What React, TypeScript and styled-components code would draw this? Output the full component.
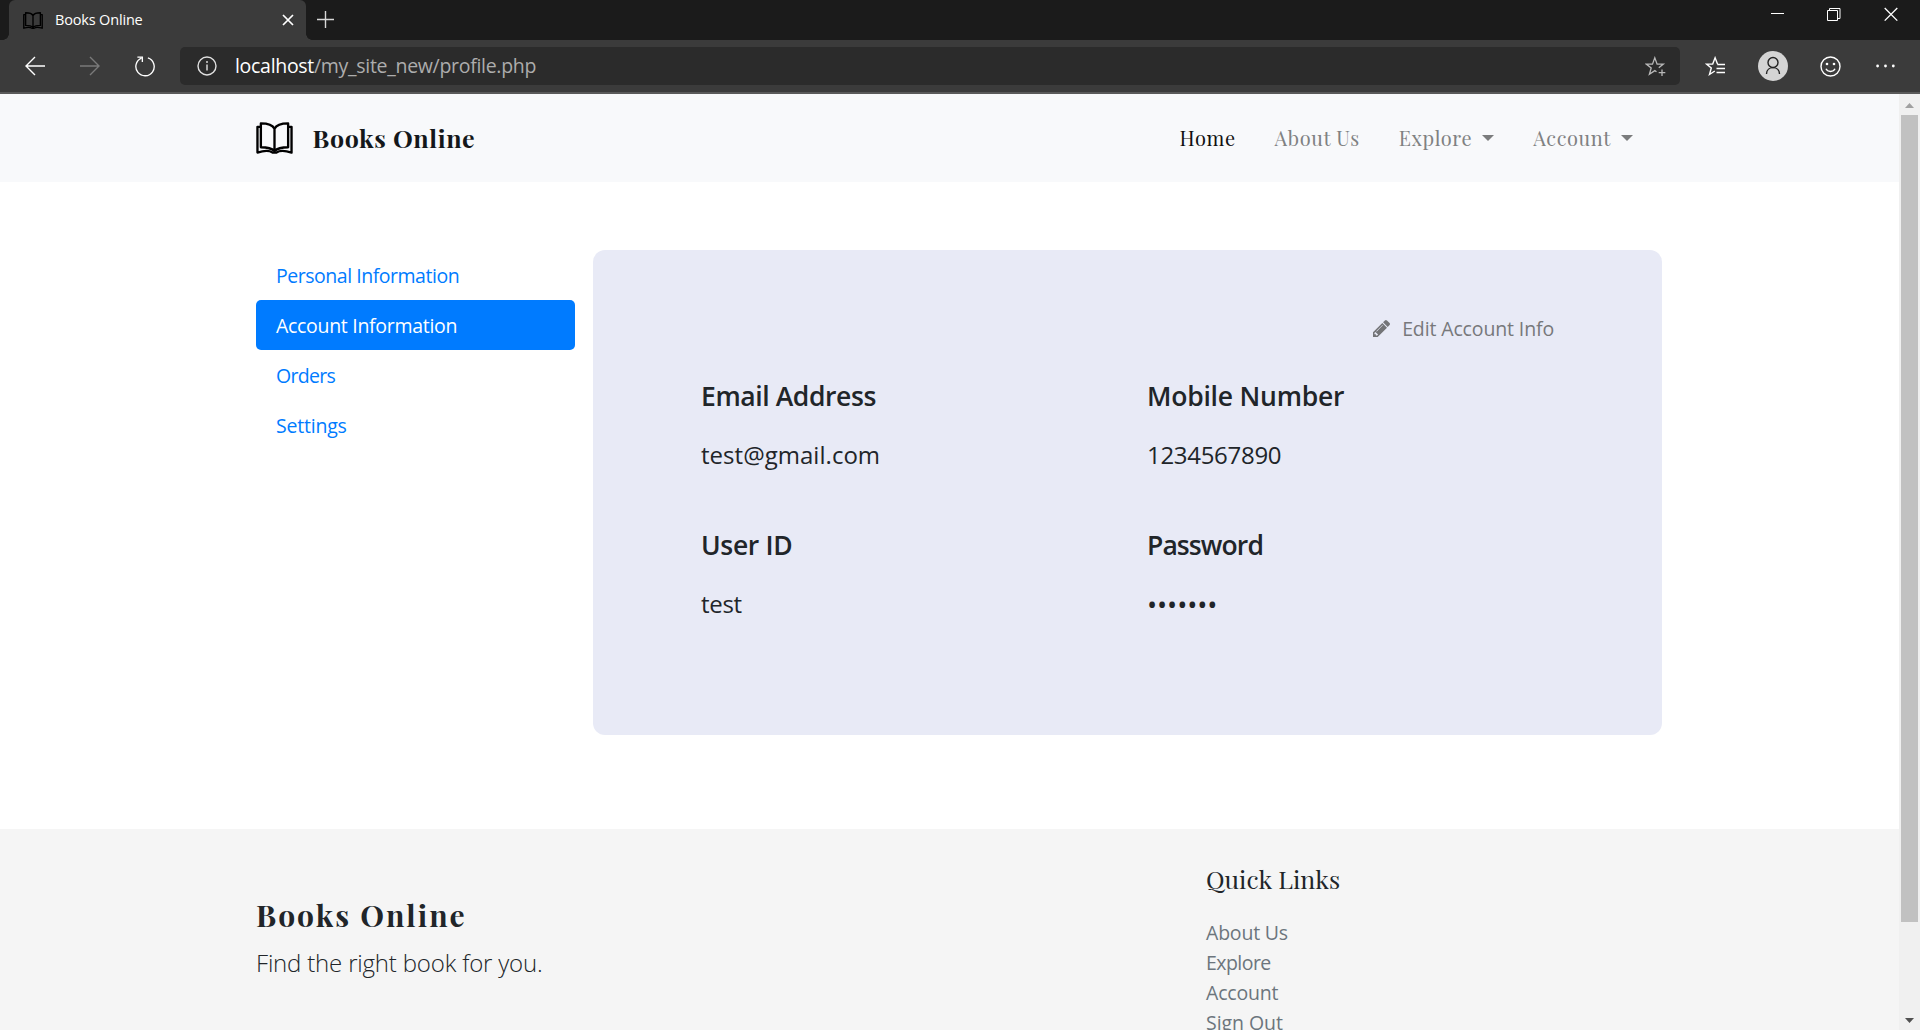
import React from "react";
import styled, { createGlobalStyle, css } from "styled-components";

const sans = `"Open Sans", "Noto Sans", sans-serif`;
const serif = `"Playfair Display", "Liberation Serif", serif`;

const Global = createGlobalStyle`
  * { box-sizing: border-box; }
  html, body { margin: 0; height: 100%; overflow: hidden; }
  body { font-family: ${sans}; color: #212529; background: #fff; }
  a { text-decoration: none; color: inherit; }
  h2, h3, h4, p { margin: 0; padding: 0; font-weight: inherit; }
  svg { display: block; flex: none; }
`;

const Window = styled.div`
  width: 1920px;
  height: 1030px;
  display: flex;
  flex-direction: column;
  overflow: hidden;
`;

/* ---- browser chrome ---- */
const TitleBar = styled.div`
  flex: none;
  height: 40px;
  background: #1b1b1b;
  display: flex;
  padding-left: 9px;
`;
const Tab = styled.div`
  position: relative;
  width: 297px;
  height: 40px;
  background: #3b3b3b;
  border-radius: 6px 6px 0 0;
  display: flex;
  align-items: center;
  padding: 0 12px 0 14px;
  color: #fff;

  /* flared feet where the tab meets the toolbar */
  &::before,
  &::after {
    content: "";
    position: absolute;
    bottom: 0;
    width: 6px;
    height: 6px;
  }
  &::before {
    left: -6px;
    background: radial-gradient(circle at 0 0, transparent 5.5px, #3b3b3b 6px);
  }
  &::after {
    right: -6px;
    background: radial-gradient(circle at 100% 0, transparent 5.5px, #3b3b3b 6px);
  }
`;
const TabTitle = styled.span`
  flex: 1;
  margin-left: 12px;
  font-size: 14.5px;
  letter-spacing: -0.17px;
  line-height: 20px;
`;
const NewTab = styled.div`
  padding: 11px 0 0 11px;
`;
const WindowControls = styled.div`
  margin-left: auto;
  display: flex;
  gap: 43px;
  padding: 7px 22px 0 0;
`;
const Toolbar = styled.div`
  flex: none;
  height: 54px;
  background: #3b3b3b;
  border-bottom: 2px solid #5a5a5a;
  display: flex;
  align-items: center;
`;
const NavButtons = styled.div`
  width: 180px;
  display: flex;
  gap: 34px;
  padding-left: 25px;
`;
const AddressBar = styled.div`
  width: 1500px;
  height: 38px;
  border-radius: 5px;
  background: #2b2b2b;
  display: flex;
  align-items: center;
  padding: 0 14px 0 17px;
`;
const Url = styled.span`
  flex: 1;
  margin-left: 18px;
  font-size: 19.5px;
  letter-spacing: -0.3px;
  line-height: 30px;
  color: #adadad;
  b { font-weight: 400; color: #fff; }
`;
const Tools = styled.div`
  flex: 1;
  display: flex;
  align-items: center;
  padding-left: 25px;
`;
const Avatar = styled.div`
  width: 30px;
  height: 30px;
  border-radius: 50%;
  background: #d4d4d4;
  margin: 0 31.5px 0 32px;
`;
const More = styled.div`
  margin-left: 35.5px;
`;

/* ---- page ---- */
const Viewport = styled.div`
  flex: 1;
  min-height: 0;
  display: flex;
`;
const Page = styled.div`
  width: 1899px;
  overflow: hidden;
`;
const Scrollbar = styled.div`
  width: 21px;
  background: #f0f0f0;
  display: flex;
  flex-direction: column;
  align-items: center;
  padding: 9px 0 7px;
`;
const Thumb = styled.div`
  width: 17px;
  height: 807px;
  margin: 7px 0 auto;
  background: #c1c1c1;
`;
const Navbar = styled.header`
  height: 88px;
  background: #f8f9fb;
  display: flex;
  align-items: center;
  padding: 0 266px 0 256px;
`;
const Brand = styled.a`
  display: flex;
  align-items: center;
  gap: 19.5px;
  margin-right: auto;
  font: 700 25px/34px ${serif};
  letter-spacing: 0.6px;
  color: #14171a;
`;
const Menu = styled.nav`
  display: flex;
  gap: 39px;
`;
const MenuLink = styled.a<{ $active?: boolean }>`
  display: flex;
  align-items: center;
  font: 400 20px/30px ${serif};
  letter-spacing: 0.6px;
  color: ${(p) => (p.$active ? "#111" : "#808182")};
`;
const Caret = styled.i`
  margin-left: 10px;
  border: 6px solid transparent;
  border-top-color: #7b7c7d;
  border-bottom: 0;
`;
const Main = styled.main`
  height: 647px;
  display: flex;
  gap: 18px;
  padding: 68px 0 0 256px;
`;
const Side = styled.nav`
  width: 319px;
`;
const Pill = styled.a<{ $active?: boolean; $track: number }>`
  display: block;
  height: 50px;
  padding: 0 20px;
  border-radius: 5px;
  font-size: 19.5px;
  line-height: 51px;
  letter-spacing: ${(p) => p.$track}px;
  color: #007bff;
  ${(p) => p.$active && css`background: #007bff; color: #fff;`}
`;
const Card = styled.section`
  width: 1069px;
  height: 485px;
  border-radius: 12px;
  background: #e8eaf6;
  padding: 63px 108px 0;
`;
const EditLink = styled.a`
  display: flex;
  justify-content: flex-end;
  align-items: center;
  gap: 12px;
  height: 30px;
  font-size: 19.5px;
  letter-spacing: -0.13px;
  color: #77787b;
`;
const Fields = styled.div`
  display: grid;
  grid-template-columns: 446px 1fr;
  grid-auto-rows: 149px;
  padding-top: 33px;
`;
const Label = styled.h4<{ $track: number }>`
  font-size: 26.5px;
  font-weight: 600;
  line-height: 40px;
  letter-spacing: ${(p) => p.$track}px;
`;
const Value = styled.p<{ $track: number; $masked?: boolean }>`
  margin-top: ${(p) => (p.$masked ? 21 : 20)}px;
  font-size: ${(p) => (p.$masked ? 27 : 24)}px;
  line-height: 38px;
  letter-spacing: ${(p) => p.$track}px;
`;
const Footer = styled.footer`
  height: 300px;
  background: #f5f5f5;
  display: flex;
  padding-left: 256px;
`;
const FooterBrand = styled.div`
  width: 950px;
  padding-top: 64px;
`;
const FooterTitle = styled.h2`
  font: 700 30px/44px ${serif};
  letter-spacing: 2px;
`;
const Tagline = styled.p`
  margin-top: 8px;
  font-size: 24px;
  font-weight: 300;
  line-height: 36px;
  letter-spacing: -0.18px;
`;
const Links = styled.div`
  padding-top: 33px;
`;
const LinksTitle = styled.h3`
  font: 400 25px/34px ${serif};
  margin-bottom: 22px;
`;
const FooterLink = styled.a<{ $track: number }>`
  display: block;
  font-size: 19.5px;
  line-height: 30px;
  letter-spacing: ${(p) => p.$track}px;
  color: #6c757d;
`;

const Book = ({ w, h, stroke = 2.4 }: { w: number; h: number; stroke?: number }) => (
  <svg width={w} height={h} viewBox="0 0 38 33" preserveAspectRatio="none" fill="none" stroke="#000" strokeWidth={stroke} strokeLinejoin="round">
    <path d="M19 7C17 3 11 1.5 5 1.5V26C11 26 16 27 19 30C22 27 27 26 33 26V1.5C27 1.5 21 3 19 7ZM19 7V30" />
    <path d="M5 5H1.5V31.5C8 29.5 14 29.5 17 31.5H21C24 29.5 30 29.5 36.5 31.5V5H33" />
  </svg>
);

const line = { fill: "none", stroke: "#fff", strokeWidth: 1.4 };

const links: [string, number][] = [["About Us", -0.2], ["Explore", -0.55], ["Account", -0.2], ["Sign Out", -0.05]];
const fields: [string, number, string, number][] = [
  ["Email Address", -0.4, "test@gmail.com", 0.03],
  ["Mobile Number", -0.22, "1234567890", -0.3],
  ["User ID", -0.33, "test", -0.3],
  ["Password", -0.9, "•••••••", -0.1],
];
const pills: [string, number][] = [["Personal Information", -0.47], ["Account Information", -0.3], ["Orders", -0.7], ["Settings", -0.2]];

export default function App() {
  return (
    <Window>
      <Global />
      <TitleBar>
        <Tab>
          <Book w={20} h={17} stroke={2.6} />
          <TabTitle>Books Online</TabTitle>
          <svg width="12" height="12" viewBox="0 0 12 12" {...line} strokeWidth={1.7}><path d="M1 1l10 10M11 1L1 11" /></svg>
        </Tab>
        <NewTab>
          <svg width="17" height="17" viewBox="0 0 17 17" {...line} stroke="#d8d8d8"><path d="M8.5 0v17M0 8.5h17" /></svg>
        </NewTab>
        <WindowControls>
          <svg width="13" height="14" viewBox="0 0 13 14" {...line} strokeWidth={1}><path d="M0 6.5h13" /></svg>
          <svg width="14" height="14" viewBox="0 0 14 14" {...line} strokeWidth={1}><path d="M.5 3.5h10v10H.5zM2.5 3V1.500h10.500v10H11" /></svg>
          <svg width="14" height="14" viewBox="0 0 14 14" {...line} strokeWidth={1.3}><path d="M.7 1l12.600 12.600M13.300 1L.7 13.600" /></svg>
        </WindowControls>
      </TitleBar>
      <Toolbar>
        <NavButtons>
          <svg width="21" height="20" viewBox="0 0 21 20" {...line}><path d="M20 10H1M10 1L1 10l9 9" /></svg>
          <svg width="21" height="20" viewBox="0 0 21 20" {...line} stroke="#7a7a7a"><path d="M0 10h19M10 1l9 9-9 9" /></svg>
          <svg width="21" height="21" viewBox="0.5 0 22 22" {...line}><path d="M14 2A9.600 9.600 0 1 1 7.200 2.300M3 1.200h5.200v5" /></svg>
        </NavButtons>
        <AddressBar>
          <svg width="20" height="20" viewBox="0 0 20 20" {...line} stroke="#e0e0e0"><circle cx="10" cy="10" r="9" /><path d="M10 8.500v6M10 5v2" /></svg>
          <Url><b>localhost</b>/my_site_new/profile.php</Url>
          <svg width="21" height="21" viewBox="0 0 21 21" {...line} strokeWidth={1.3} stroke="#b8b8b8"><path d="M13.800 11.700L18.300 8.100H12.100L9.800 1.800L7.500 8.100H1.300L6.200 12L4.400 18.300L9.800 14.600L11.500 15.800M17 13.500v6.500M13.700 16.700h6.600" /></svg>
        </AddressBar>
        <Tools>
          <svg width="21" height="21" viewBox="0 0 21 21" {...line}><path d="M12.500 8.100L10.100 1.800L7.700 8.100H1.500L6.300 12L4.500 18.500L9.800 15M12.300 8.500H20M11.500 12.500H20M11.500 16.500H20" /></svg>
          <Avatar>
            <svg width="30" height="30" viewBox="0 0 30 30" {...line} stroke="#222"><circle cx="15" cy="11.500" r="5" /><path d="M8.500 23c0-8.500 13-8.500 13 0" /></svg>
          </Avatar>
          <svg width="21" height="21" viewBox="0 0 21 21" {...line}><circle cx="10.500" cy="10.500" r="9.500" /><path d="M6 12.800c1.500 3.500 7.500 3.500 9 0" /><g fill="#fff" stroke="none"><circle cx="7" cy="8" r="1.300" /><circle cx="14" cy="8" r="1.300" /></g></svg>
          <More>
            <svg width="19" height="4" viewBox="0 0 19 4" fill="#fff"><circle cx="1.600" cy="2" r="1.400" /><circle cx="9.500" cy="2" r="1.400" /><circle cx="17.300" cy="2" r="1.400" /></svg>
          </More>
        </Tools>
      </Toolbar>
      <Viewport>
        <Page>
          <Navbar>
            <Brand href="#"><Book w={37} h={32} />Books Online</Brand>
            <Menu>
              <MenuLink href="#" $active>Home</MenuLink>
              <MenuLink href="#">About Us</MenuLink>
              <MenuLink href="#">Explore<Caret /></MenuLink>
              <MenuLink href="#">Account<Caret /></MenuLink>
            </Menu>
          </Navbar>
          <Main>
            <Side>
              {pills.map(([t, k], i) => <Pill href="#" key={t} $active={i === 1} $track={k}>{t}</Pill>)}
            </Side>
            <Card>
              <EditLink href="#">
                <svg width="17" height="17" viewBox="128 149 1515 1515" fill="#737477">
                  <path d="M491 1536l91-91-235-235-91 91v107h128v128h107zM1014 608q0-22-22-22-10 0-17 7l-542 542q-7 7-7 17 0 22 22 22 10 0 17-7l542-542q7-7 7-17zM960 416l416 416-832 832h-416v-416zM1643 512q0 53-37 90l-166 166-416-416 166-165q36-38 90-38 53 0 91 38l235 234q37 39 37 91z" />
                </svg>
                Edit Account Info
              </EditLink>
              <Fields>
                {fields.map(([l, lk, v, vk]) => (
                  <div key={l}>
                    <Label $track={lk}>{l}</Label>
                    <Value $track={vk} $masked={l === "Password"}>{v}</Value>
                  </div>
                ))}
              </Fields>
            </Card>
          </Main>
          <Footer>
            <FooterBrand>
              <FooterTitle>Books Online</FooterTitle>
              <Tagline>Find the right book for you.</Tagline>
            </FooterBrand>
            <Links>
              <LinksTitle>Quick Links</LinksTitle>
              {links.map(([t, k]) => <FooterLink href="#" key={t} $track={k}>{t}</FooterLink>)}
            </Links>
          </Footer>
        </Page>
        <Scrollbar>
          <svg width="9" height="5" viewBox="0 0 9 5" fill="#a0a0a0"><path d="M0 5L4.500 0L9 5z" /></svg>
          <Thumb />
          <svg width="9" height="5" viewBox="0 0 9 5" fill="#505050"><path d="M0 0L4.500 5L9 0z" /></svg>
        </Scrollbar>
      </Viewport>
    </Window>
  );
}
